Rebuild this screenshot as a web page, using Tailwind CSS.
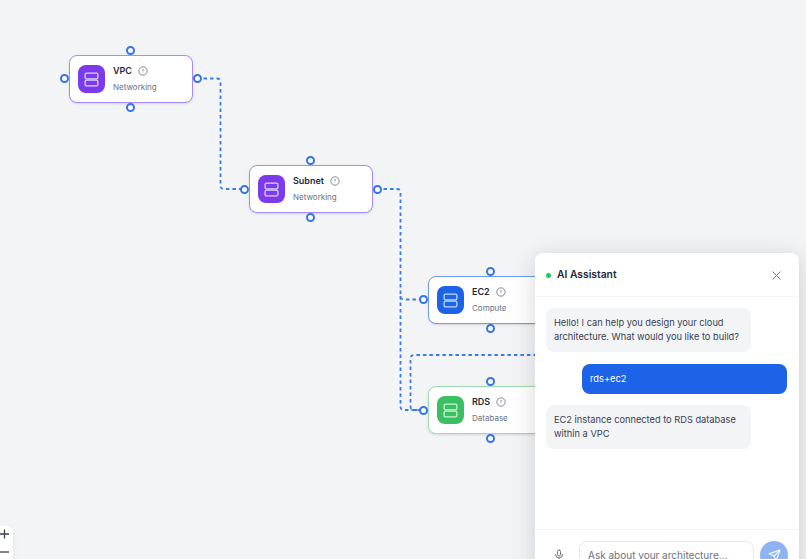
<!DOCTYPE html>
<html lang="en">
<head>
    <meta charset="UTF-8">
    <meta name="viewport" content="width=device-width, initial-scale=1.0">
    <title>Cloud Architecture</title>
    <script src="https://cdn.jsdelivr.net/npm/@tailwindcss/browser@4"></script>
</head>
<body class="bg-[#f3f4f6] h-screen overflow-hidden font-['Inter',sans-serif]">
<div class="relative w-[806px] h-[559px] overflow-hidden">

    <!-- edges -->
    <svg class="absolute inset-0" width="806" height="559" fill="none" stroke="#3b7be8" stroke-width="1.8" stroke-dasharray="3.5 3">
        <path d="M197 78.500H217Q220.500 78.500 220.500 82V185.500Q220.500 189 224 189H244"/>
        <path d="M377 189H397Q400.500 189 400.500 192.500V296Q400.500 299.500 404 299.500H424"/>
        <path d="M400.500 296V406.500Q400.500 410 404 410H424"/>
        <path d="M424 410H414Q410.500 410 410.500 406.500V358.500Q410.500 355 414 355H600"/>
    </svg>

    <!-- VPC -->
    <div class="absolute left-[69px] top-[55px] w-[124px] h-[48px] bg-white border border-[#a78bfa] rounded-lg shadow-sm flex items-center gap-2 px-2">
        <div class="w-[27px] h-[28px] rounded-lg bg-[#7c3aed] flex items-center justify-center shrink-0">
            <svg width="17" height="17" viewBox="0 0 24 24" fill="none" stroke="#ddd6fe" stroke-width="1.800"><rect x="3" y="3" width="18" height="8" rx="2"/><rect x="3" y="13" width="18" height="8" rx="2"/></svg>
        </div>
        <div class="-mt-[2px]">
            <div class="flex items-center gap-[6px] text-[9px] leading-[14px] font-semibold text-[#1f2937]">VPC
                <svg width="10" height="10" viewBox="0 0 24 24" fill="none" stroke="#6b7280" stroke-width="2"><circle cx="12" cy="12" r="10"/><path d="M12 7v6M12 16.500v.5"/></svg>
            </div>
            <div class="text-[8px] leading-[12px] mt-[3px] text-[#6b7280]">Networking</div>
        </div>
    </div>
    <span class="absolute left-[126px] top-[46px] w-[9px] h-[9px] rounded-full bg-white border-2 border-[#3374e6]"></span>
    <span class="absolute left-[126px] top-[103px] w-[9px] h-[9px] rounded-full bg-white border-2 border-[#3374e6]"></span>
    <span class="absolute left-[60px] top-[74px] w-[9px] h-[9px] rounded-full bg-white border-2 border-[#3374e6]"></span>
    <span class="absolute left-[193px] top-[74px] w-[9px] h-[9px] rounded-full bg-white border-2 border-[#3374e6]"></span>

    <!-- Subnet -->
    <div class="absolute left-[249px] top-[165px] w-[124px] h-[48px] bg-white border border-[#a78bfa] rounded-lg shadow-sm flex items-center gap-2 px-2">
        <div class="w-[27px] h-[28px] rounded-lg bg-[#7c3aed] flex items-center justify-center shrink-0">
            <svg width="17" height="17" viewBox="0 0 24 24" fill="none" stroke="#ddd6fe" stroke-width="1.800"><rect x="3" y="3" width="18" height="8" rx="2"/><rect x="3" y="13" width="18" height="8" rx="2"/></svg>
        </div>
        <div class="-mt-[2px]">
            <div class="flex items-center gap-[6px] text-[9px] leading-[14px] font-semibold text-[#1f2937]">Subnet
                <svg width="10" height="10" viewBox="0 0 24 24" fill="none" stroke="#6b7280" stroke-width="2"><circle cx="12" cy="12" r="10"/><path d="M12 7v6M12 16.500v.5"/></svg>
            </div>
            <div class="text-[8px] leading-[12px] mt-[3px] text-[#6b7280]">Networking</div>
        </div>
    </div>
    <span class="absolute left-[306px] top-[156px] w-[9px] h-[9px] rounded-full bg-white border-2 border-[#3374e6]"></span>
    <span class="absolute left-[306px] top-[213px] w-[9px] h-[9px] rounded-full bg-white border-2 border-[#3374e6]"></span>
    <span class="absolute left-[240px] top-[185px] w-[9px] h-[9px] rounded-full bg-white border-2 border-[#3374e6]"></span>
    <span class="absolute left-[373px] top-[185px] w-[9px] h-[9px] rounded-full bg-white border-2 border-[#3374e6]"></span>

    <!-- EC2 -->
    <div class="absolute left-[428px] top-[276px] w-[124px] h-[48px] bg-white border border-[#6d9cf0] rounded-lg shadow-sm flex items-center gap-2 px-2">
        <div class="w-[27px] h-[28px] rounded-lg bg-[#1d63e8] flex items-center justify-center shrink-0">
            <svg width="17" height="17" viewBox="0 0 24 24" fill="none" stroke="#bfdbfe" stroke-width="1.800"><rect x="3" y="3" width="18" height="8" rx="2"/><rect x="3" y="13" width="18" height="8" rx="2"/></svg>
        </div>
        <div class="-mt-[2px]">
            <div class="flex items-center gap-[6px] text-[9px] leading-[14px] font-semibold text-[#1f2937]">EC2
                <svg width="10" height="10" viewBox="0 0 24 24" fill="none" stroke="#6b7280" stroke-width="2"><circle cx="12" cy="12" r="10"/><path d="M12 7v6M12 16.500v.5"/></svg>
            </div>
            <div class="text-[8px] leading-[12px] mt-[3px] text-[#6b7280]">Compute</div>
        </div>
    </div>
    <span class="absolute left-[486px] top-[267px] w-[9px] h-[9px] rounded-full bg-white border-2 border-[#3374e6]"></span>
    <span class="absolute left-[486px] top-[324px] w-[9px] h-[9px] rounded-full bg-white border-2 border-[#3374e6]"></span>
    <span class="absolute left-[419px] top-[295px] w-[9px] h-[9px] rounded-full bg-white border-2 border-[#3374e6]"></span>

    <!-- RDS -->
    <div class="absolute left-[428px] top-[386px] w-[124px] h-[48px] bg-white border border-[#9fdcb0] rounded-lg shadow-sm flex items-center gap-2 px-2">
        <div class="w-[27px] h-[28px] rounded-lg bg-[#3bbf62] flex items-center justify-center shrink-0">
            <svg width="17" height="17" viewBox="0 0 24 24" fill="none" stroke="#c6f6d5" stroke-width="1.800"><rect x="3" y="3" width="18" height="8" rx="2"/><rect x="3" y="13" width="18" height="8" rx="2"/></svg>
        </div>
        <div class="-mt-[2px]">
            <div class="flex items-center gap-[6px] text-[9px] leading-[14px] font-semibold text-[#1f2937]">RDS
                <svg width="10" height="10" viewBox="0 0 24 24" fill="none" stroke="#6b7280" stroke-width="2"><circle cx="12" cy="12" r="10"/><path d="M12 7v6M12 16.500v.5"/></svg>
            </div>
            <div class="text-[8px] leading-[12px] mt-[3px] text-[#6b7280]">Database</div>
        </div>
    </div>
    <span class="absolute left-[486px] top-[377px] w-[9px] h-[9px] rounded-full bg-white border-2 border-[#3374e6]"></span>
    <span class="absolute left-[486px] top-[434px] w-[9px] h-[9px] rounded-full bg-white border-2 border-[#3374e6]"></span>
    <span class="absolute left-[419px] top-[406px] w-[9px] h-[9px] rounded-full bg-white border-2 border-[#3374e6]"></span>

    <!-- zoom controls -->
    <div class="absolute left-[-14px] top-[526px] w-[27px] h-[54px] bg-white rounded-md shadow-md flex flex-col items-end pr-[4px] text-[#374151]">
        <div class="h-[16px] flex items-center">
            <svg width="9" height="10" viewBox="0 0 9 10" stroke="#374151" stroke-width="1.300"><path d="M0 5H9M4.500 0.500V9.500"/></svg>
        </div>
        <div class="h-[20px] flex items-center">
            <svg width="9" height="10" viewBox="0 0 9 10" stroke="#374151" stroke-width="1.300"><path d="M0 5H9"/></svg>
        </div>
    </div>

    <!-- assistant panel -->
    <div class="absolute left-[535px] top-[253px] w-[264px] h-[330px] bg-white rounded-t-lg shadow-[0_4px_24px_rgba(0,0,0,0.16)] flex flex-col">
        <div class="h-[44px] shrink-0 border-b border-[#f3f4f6] flex items-center justify-between pl-[11px] pr-[18px] pt-[1px]">
            <div class="flex items-center gap-[6px]">
                <span class="w-[5px] h-[5px] rounded-full bg-[#22c55e]"></span>
                <span class="text-[10.300px] font-semibold text-[#1f2937]">AI Assistant</span>
            </div>
            <svg class="translate-x-[1px]" width="11" height="11" viewBox="0 0 24 24" fill="none" stroke="#6b7280" stroke-width="2" stroke-linecap="round"><path d="M4 4L20 20M20 4L4 20"/></svg>
        </div>
        <div class="h-[232px] shrink-0 px-[11px] pt-[11px] flex flex-col gap-[11px] text-[9.250px] leading-[14px]">
            <div class="w-[205px] h-[44px] rounded-lg bg-[#f3f4f6] text-[#374151] px-2 py-2">Hello! I can help you design your cloud architecture. What would you like to build?</div>
            <div class="w-[205px] h-[30px] rounded-lg bg-[#1d63e8] text-white px-2 py-2 ml-[36px] mt-[1px]">rds+ec2</div>
            <div class="w-[205px] h-[44px] rounded-lg bg-[#f3f4f6] text-[#374151] px-2 py-2">EC2 instance connected to RDS database within a VPC</div>
        </div>
        <div class="border-t border-[#f3f4f6] pt-[11px] pl-[18px] flex items-start gap-[6px]">
            <div class="w-[12px] h-[28px] flex items-center justify-center">
                <svg width="12" height="12" viewBox="0 0 24 24" fill="none" stroke="#6b7280" stroke-width="2" stroke-linecap="round"><rect x="9" y="2" width="6" height="12" rx="3"/><path d="M5 11a7 7 0 0 0 14 0M12 18v4"/></svg>
            </div>
            <div class="ml-[8px] w-[175px] h-[28px] rounded-lg border border-[#e5e7eb] bg-white flex items-center px-2 text-[10px] text-[#6b7280]">Ask about your architecture...</div>
            <div class="w-[28px] h-[28px] rounded-full bg-[#8fb3f5] flex items-center justify-center">
                <svg width="13" height="13" viewBox="0 0 24 24" fill="none" stroke="#fff" stroke-width="2" stroke-linejoin="round"><path d="M22 2L15 22L11 13L2 9Z"/><path d="M22 2L11 13"/></svg>
            </div>
        </div>
    </div>
</div>
</body>
</html>
